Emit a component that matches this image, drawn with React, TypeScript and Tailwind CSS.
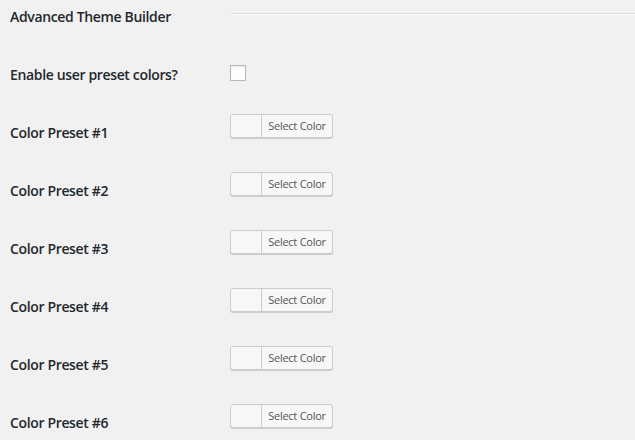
const presets = [1, 2, 3, 4, 5, 6];

const ColorButton = () => (
  <button
    type="button"
    className="flex h-[24px] w-[103px] items-stretch overflow-hidden rounded-[3px] border border-[#ccc] bg-[#f7f7f7] p-0 shadow-[0_1px_0_#ccc]"
  >
    <span className="block w-[31px] border-r border-[#ccc] bg-[#f7f7f7]" />
    <span className="flex flex-1 items-center justify-center text-[11px] leading-[22px] tracking-[-0.25px] text-[#555]">
      Select Color
    </span>
  </button>
);

export default function App() {
  return (
    <div
      className="min-h-[440px] w-[635px] bg-[#f1f1f1] pl-[10px] text-[#23282d]"
      style={{ fontFamily: '"Open Sans", "Noto Sans", sans-serif' }}
    >
      <div className="flex h-[41px]">
        <div className="w-[220px] pt-[8px] text-[14px] font-semibold leading-[18px] tracking-[-0.35px]">
          Advanced Theme Builder
        </div>
        <div className="flex-1 pt-[13px]">
          <div className="h-[2px] border-t border-b border-t-[#ddd] border-b-[#fafafa]" />
        </div>
      </div>

      <div className="flex h-[58px]">
        <div className="w-[220px] pt-[25px] text-[14px] font-semibold leading-[18px] tracking-[-0.35px]">
          Enable user preset colors?
        </div>
        <div className="pt-[24px]">
          <input
            type="checkbox"
            className="block h-[16px] w-[16px] appearance-none border border-[#b4b9be] bg-white shadow-[inset_0_1px_2px_rgba(0,0,0,0.1)]"
          />
        </div>
      </div>

      {presets.map((n) => (
        <div key={n} className="flex h-[58px]">
          <div className="w-[220px] pt-[25px] text-[14px] font-semibold leading-[18px] tracking-[-0.35px]">
            Color Preset #{n}
          </div>
          <div className="pt-[15px]">
            <ColorButton />
          </div>
        </div>
      ))}
    </div>
  );
}
